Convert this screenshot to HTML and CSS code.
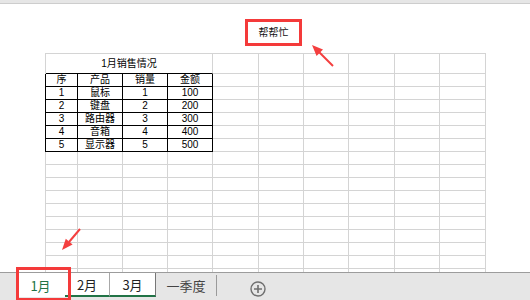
FILE: index.html
```html
<!DOCTYPE html>
<html lang="zh-CN">
<head>
    <meta charset="UTF-8">
    <title>1月销售情况</title>
    <link rel="stylesheet" href="styles.css">
</head>
<body>

    <div class="topbar"></div>

    <!-- Sheet area -->
    <div class="sheet">
        <div class="callout">帮帮忙</div>
        <div class="grid" id="grid"></div>
    </div>

    <!-- Sheet tabs -->
    <div class="tabbar">
        <div class="tab tab-active">1月</div>
        <div class="tab tab-group">2月</div>
        <div class="tab tab-group">3月</div>
        <div class="tab tab-plain">一季度</div>
        <div class="add-sheet">
            <svg width="16" height="16" viewBox="0 0 16 16">
                <circle cx="8" cy="8" r="7" fill="none" stroke="#6f6f6f" stroke-width="1.4"/>
                <path d="M8 4v8M4 8h8" stroke="#6f6f6f" stroke-width="1.6"/>
            </svg>
        </div>
    </div>

    <!-- Annotation arrows -->
    <svg class="arrows" width="530" height="300" viewBox="0 0 530 300">
        <line x1="333" y1="66" x2="318" y2="51" stroke="#f43f3f" stroke-width="2"/>
        <polygon points="312,45 323,49.6 316.6,56" fill="#f43f3f"/>
        <line x1="80" y1="229" x2="69" y2="242" stroke="#f43f3f" stroke-width="2"/>
        <polygon points="62,250 72.6,244.6 65.8,238.8" fill="#f43f3f"/>
    </svg>

    <script>
        var data = [
            ["序", "产品", "销量", "金额"],
            ["1", "鼠标", "1", "100"],
            ["2", "键盘", "2", "200"],
            ["3", "路由器", "3", "300"],
            ["4", "音箱", "4", "400"],
            ["5", "显示器", "5", "500"]
        ];

        var grid = document.getElementById("grid");

        function addCell(text, cls) {
            var cell = document.createElement("div");
            cell.className = "cell" + (cls ? " " + cls : "");
            cell.textContent = text || "";
            grid.appendChild(cell);
        }

        function addEmpty(count) {
            for (var i = 0; i < count; i++) {
                addCell("");
            }
        }

        // title row, merged over the first four columns
        addCell("1月销售情况", "title");
        addEmpty(6);

        data.forEach(function(row) {
            row.forEach(function(value, i) {
                addCell(value, i === 0 ? "data first" : "data");
            });
            addEmpty(6);
        });

        // blank rows down to the tab bar
        addEmpty(12 * 10);
    </script>

</body>
</html>
```

FILE: styles.css
```css
* {
    box-sizing: border-box;
}

body {
    margin: 0;
    width: 530px;
    height: 300px;
    position: relative;
    display: flex;
    flex-direction: column;
    background: white;
    font-family: "Noto Sans CJK SC", "Noto Sans", sans-serif;
    overflow: hidden;
}

.topbar {
    height: 4px;
    background: #e6e6e6;
    border-bottom: 1px solid #cdcdcd;
}

.sheet {
    flex: 1;
    overflow: hidden;
    padding: 15px 0 0 45px;
}

.callout {
    margin-left: 200px;
    width: 57px;
    height: 27px;
    border: 3px solid #f43a3a;
    display: flex;
    align-items: center;
    justify-content: center;
    font-family: "Liberation Sans", "Noto Sans CJK SC", sans-serif;
    font-size: 10px;
    line-height: 1;
    color: #111;
}

.grid {
    margin-top: 7px;
    display: grid;
    grid-template-columns: 32px 45px 45px 45px 46px 45px 45px 46px 45px 46px;
    grid-template-rows: 20px;
    grid-auto-rows: 13px;
    width: max-content;
    border-left: 1px solid #d4d4d4;
    border-top: 1px solid #d4d4d4;
}

.cell {
    border-right: 1px solid #d4d4d4;
    border-bottom: 1px solid #d4d4d4;
    display: flex;
    align-items: center;
    justify-content: center;
    overflow: hidden;
    font-family: "Liberation Sans", "Noto Sans CJK SC", sans-serif;
    font-size: 10px;
    line-height: 1;
    color: #000;
}

.cell.title {
    grid-column: span 4;
    border-bottom-color: #000;
}

.cell.data {
    border-color: #000;
}

.cell.first {
    box-shadow: -1px 0 0 #000;
}

.tabbar {
    height: 28px;
    border-top: 1px solid #9c9c9c;
    background: #e6e6e6;
    display: flex;
    align-items: flex-start;
    padding-left: 16px;
}

.tab {
    height: 24px;
    display: flex;
    align-items: center;
    justify-content: center;
    font-size: 13px;
    color: #222;
}

.tab-active {
    position: relative;
    width: 49px;
    background: white;
    color: #217346;
}

.tab-active::after {
    content: "";
    position: absolute;
    left: 0;
    top: -6px;
    width: 49px;
    height: 28px;
    border: 3px solid #f43a3a;
}

.tab-group {
    background: white;
    border-bottom: 2px solid #217346;
    border-right: 1px solid #a8a8a8;
}

.tab-group:nth-child(2) {
    width: 45px;
}

.tab-group:nth-child(3) {
    width: 46px;
    border-right-color: #777;
}

.tab-plain {
    width: 61px;
    margin-top: 2px;
    height: 21px;
    border-right: 1px solid #9a9a9a;
    color: #444;
}

.add-sheet {
    margin: 5px 0 0 33px;
    width: 16px;
    height: 16px;
}

.arrows {
    position: absolute;
    left: 0;
    top: 0;
    pointer-events: none;
}
```
